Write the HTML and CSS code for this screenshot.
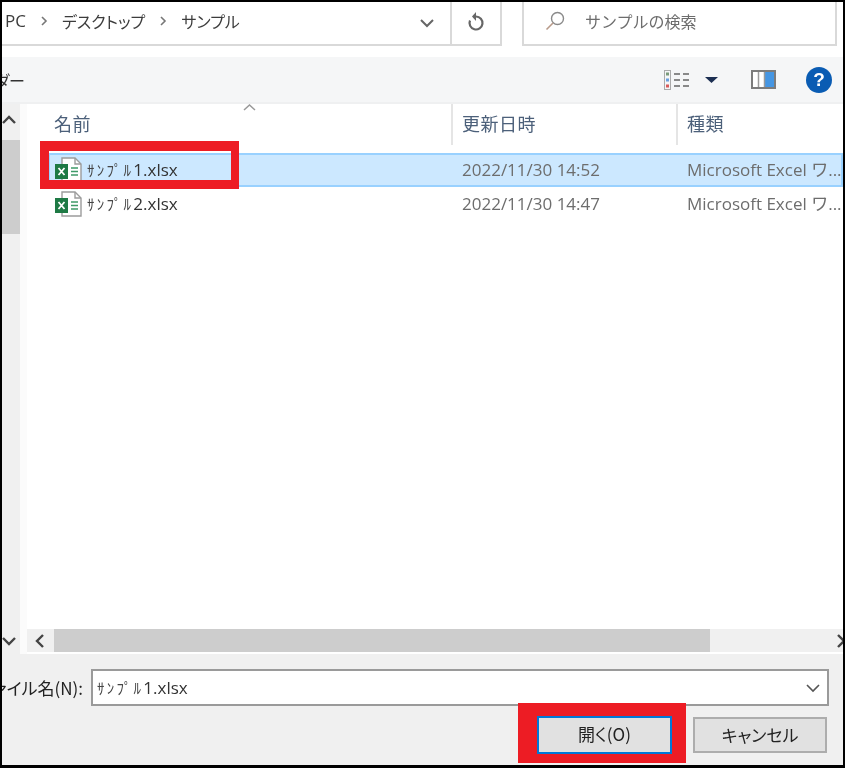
FILE: index.html
```html
<!DOCTYPE html>
<html lang="ja">
<head>
<meta charset="utf-8">
<title>ファイルを開く</title>
<link rel="stylesheet" href="styles.css">
</head>
<body>
<div class="frame">
  <div class="addressrow">
    <div class="address">
      <span class="crumb pc">PC</span>
      <svg class="sep" width="8" height="12" viewBox="0 0 8 12"><path d="M2 2l4 4-4 4" fill="none" stroke="#777" stroke-width="1.6"/></svg>
      <span class="crumb">デスクトップ</span>
      <svg class="sep" width="8" height="12" viewBox="0 0 8 12"><path d="M2 2l4 4-4 4" fill="none" stroke="#777" stroke-width="1.6"/></svg>
      <span class="crumb">サンプル</span>
      <svg class="addr-chev" width="16" height="10" viewBox="0 0 16 10"><path d="M2 2l6 6 6-6" fill="none" stroke="#666" stroke-width="2"/></svg>
    </div>
    <div class="refresh">
      <svg width="18" height="20" viewBox="0 0 18 20"><path d="M9 4.500a6.500 6.500 0 1 1-6 4" fill="none" stroke="#666" stroke-width="2.200"/><path d="M7 0v9l-4-4.500z" fill="#666" transform="translate(2 0)"/></svg>
    </div>
    <div class="search">
      <svg width="22" height="22" viewBox="0 0 22 22"><circle cx="13.500" cy="8.500" r="6" fill="none" stroke="#8a8a8a" stroke-width="1.400"/><path d="M9 13l-6.500 6.500" stroke="#b89a8a" stroke-width="1.600"/></svg>
      <span class="search-text">サンプルの検索</span>
    </div>
  </div>
  <div class="gapband"></div>
  <div class="toolbar">
    <div class="newfolder"><span>新しいフォルダー</span></div>
    <svg class="viewicon" width="26" height="20" viewBox="0 0 26 20">
      <rect x="0.500" y="0.500" width="6" height="19" fill="#f5f6f7" stroke="#aaa"/>
      <rect x="2" y="2.500" width="3" height="3" fill="#7a9a7a"/><rect x="2" y="8.500" width="3" height="3" fill="#6aa0e0"/><rect x="2" y="14.500" width="3" height="3" fill="#d85a5a"/>
      <path d="M10 4h6M19 4h6M10 10h6M19 10h6M10 16h6M19 16h6" stroke="#666" stroke-width="1.500"/>
    </svg>
    <svg class="dropicon" width="13" height="6" viewBox="0 0 13 6"><path d="M0 0h13l-6.500 6z" fill="#1c2f52"/></svg>
    <svg class="paneicon" width="25" height="19" viewBox="0 0 25 19">
      <rect x="1" y="1" width="23" height="17" fill="#fff" stroke="#7c7c7c" stroke-width="2"/>
      <rect x="14" y="2" width="9" height="15" fill="#4596e3"/>
      <path d="M7.500 2v15M13.500 2v15" stroke="#9a9a9a" stroke-width="1.500"/>
    </svg>
    <span class="help">?</span>
  </div>
  <div class="main">
    <div class="vscroll">
      <svg class="vchev" width="16" height="10" viewBox="0 0 16 10"><path d="M1 8l6-6 6 6" fill="none" stroke="#444" stroke-width="2.400"/></svg>
      <div class="vthumb"></div>
      <svg class="vchev bottom" width="16" height="10" viewBox="0 0 16 10"><path d="M1 2l6 6 6-6" fill="none" stroke="#444" stroke-width="2.400"/></svg>
    </div>
    <div class="strip"></div>
    <div class="pane">
      <div class="list">
        <div class="header">
          <div class="col-name head">名前
            <svg class="sort" width="13" height="7" viewBox="0 0 13 7"><path d="M1 6l5.500-5 5.500 5" fill="none" stroke="#999" stroke-width="1.500"/></svg>
          </div>
          <div class="col-date head">更新日時</div>
          <div class="col-type head">種類</div>
        </div>
        <div class="rows">
          <div class="row selected">
            <div class="col-name file">
              <svg class="xl" width="27" height="26" viewBox="0 0 27 26">
                <path d="M7 1h13l6 6v18H7z" fill="#fff" stroke="#9c9c9c" stroke-width="1.400"/><path d="M20 1v6h6" fill="none" stroke="#9c9c9c" stroke-width="1.400"/>
                <rect x="0" y="7" width="13" height="15" fill="#1e7a45"/>
                <path d="M3.500 11l6 7M9.500 11l-6 7" stroke="#fff" stroke-width="1.800"/>
                <path d="M16 11h7M16 14.500h7M16 18h7" stroke="#3f9a68" stroke-width="1.500"/>
              </svg>
              <span class="name"><span class="kana">ｻﾝﾌﾟﾙ</span>1.xlsx</span>
            </div>
            <div class="col-date cell">2022/11/30 14:52</div>
            <div class="col-type cell">Microsoft Excel ワ...</div>
          </div>
          <div class="row">
            <div class="col-name file">
              <svg class="xl" width="27" height="26" viewBox="0 0 27 26">
                <path d="M7 1h13l6 6v18H7z" fill="#fff" stroke="#9c9c9c" stroke-width="1.400"/><path d="M20 1v6h6" fill="none" stroke="#9c9c9c" stroke-width="1.400"/>
                <rect x="0" y="7" width="13" height="15" fill="#1e7a45"/>
                <path d="M3.500 11l6 7M9.500 11l-6 7" stroke="#fff" stroke-width="1.800"/>
                <path d="M16 11h7M16 14.500h7M16 18h7" stroke="#3f9a68" stroke-width="1.500"/>
              </svg>
              <span class="name"><span class="kana">ｻﾝﾌﾟﾙ</span>2.xlsx</span>
            </div>
            <div class="col-date cell">2022/11/30 14:47</div>
            <div class="col-type cell">Microsoft Excel ワ...</div>
          </div>
        </div>
      </div>
      <div class="hscroll">
        <svg class="hchev" width="10" height="16" viewBox="0 0 10 16"><path d="M8 2L2 8l6 6" fill="none" stroke="#444" stroke-width="2.400"/></svg>
        <div class="hthumb"></div>
        <svg class="hchev right" width="10" height="16" viewBox="0 0 10 16"><path d="M2 2l6 6-6 6" fill="none" stroke="#444" stroke-width="2.400"/></svg>
      </div>
    </div>
  </div>
  <div class="bottom-panel">
    <div class="filerow">
      <div class="filelabel"><span>ファイル名(N):</span></div>
      <div class="fileinput">
        <span class="name"><span class="kana">ｻﾝﾌﾟﾙ</span>1.xlsx</span>
        <svg width="16" height="10" viewBox="0 0 16 10"><path d="M2 2l6 6 6-6" fill="none" stroke="#555" stroke-width="1.600"/></svg>
      </div>
    </div>
    <div class="buttons">
      <div class="btn primary">開く(O)</div>
      <div class="btn cancel">キャンセル</div>
    </div>
  </div>
  <div class="mark mark-file"></div>
  <div class="mark mark-open"></div>
</div>
</body>
</html>
```

FILE: styles.css
```css
* { box-sizing: border-box; }
html, body { margin: 0; padding: 0; background: #fff; }
body { width: 845px; height: 768px; overflow: hidden; font-family: "Open Sans", "Noto Sans CJK JP", sans-serif; }

.frame {
  position: relative;
  width: 845px;
  height: 768px;
  border: solid #000;
  border-width: 2px 2px 3px 2px;
  background: #fff;
  overflow: hidden;
  display: flex;
  flex-direction: column;
  filter: blur(0.55px);
}

.addressrow { display: flex; height: 44px; flex: none; }
.address {
  width: 448px;
  border-bottom: 2px solid #d9d9d9;
  display: flex;
  align-items: center;
  padding-left: 3px;
  position: relative;
  padding-bottom: 4px;
}
.crumb { font-size: 16px; color: #3c3c3c; font-feature-settings: "palt"; font-family: "Noto Sans CJK JP", sans-serif; line-height: 24px; }
.crumb.pc { font-family: "Open Sans", sans-serif; font-size: 17px; }
.sep { margin: 0 14px 0 14px; }
.addr-chev { margin-left: auto; margin-right: 15px; margin-top: 4px; }

.refresh {
  width: 52px;
  border: solid #d9d9d9;
  border-width: 0 2px 2px 2px;
  display: flex;
  align-items: center;
  justify-content: center;
  padding-bottom: 2px;
}
.search {
  width: 315px;
  margin-left: 20px;
  border: solid #d9d9d9;
  border-width: 0 2px 2px 2px;
  display: flex;
  align-items: center;
  padding: 0 0 4px 20px;
}
.search-text { font-size: 16px; color: #6d6d6d; margin-left: 19px; font-family: "Noto Sans CJK JP", sans-serif; }

.gapband { height: 11px; flex: none; }

.toolbar {
  height: 47px;
  flex: none;
  background: #f5f6f7;
  border-bottom: 2px solid #eff0f1;
  display: flex;
  align-items: center;
  position: relative;
}
.newfolder {
  width: 23px;
  flex: none;
  overflow: hidden;
  display: flex;
  justify-content: flex-end;
  font-size: 16px;
  color: #333;
  white-space: nowrap;
  font-family: "Noto Sans CJK JP", sans-serif;
  font-feature-settings: "palt";
  margin-right: 639px;
}
.newfolder span { flex: none; }
.viewicon { flex: none; margin-right: 15px; }
.dropicon { flex: none; margin-right: 33px; }
.paneicon { flex: none; margin-right: 30px; }
.help {
  width: 26px;
  height: 26px;
  flex: none;
  border-radius: 50%;
  background: #0a5cb3;
  color: #fff;
  font: 700 19px/26px "Liberation Sans", sans-serif;
  text-align: center;
}

.main { display: flex; flex: 1; min-height: 0; }
.vscroll {
  width: 18px;
  flex: none;
  background: #f0f0f0;
  display: flex;
  flex-direction: column;
  height: 550px;
}
.vchev { margin: 11px 0 0 0; flex: none; }
.vchev.bottom { margin: auto 0 8px 0; }
.vthumb { height: 94px; margin-top: 15px; background: #cdcdcd; flex: none; }
.strip { width: 7px; flex: none; background: #fbfbfb; height: 550px; }

.pane { flex: 1; min-width: 0; display: flex; flex-direction: column; height: 548px; }
.list { flex: 1; min-height: 0; overflow: hidden; }
.header { display: flex; height: 41px; }
.col-name { width: 424px; flex: none; position: relative; }
.col-date { width: 225px; flex: none; padding-left: 9px; }
.col-type { flex: 1; padding-left: 9px; white-space: nowrap; overflow: hidden; }
.head {
  font-size: 18px;
  color: #4c607a;
  font-family: "Noto Sans CJK JP", sans-serif;
  line-height: 38px;
  letter-spacing: 0.5px;
}
.col-name.head { padding-left: 27px; }
.col-date.head, .col-type.head { border-left: 2px solid #e5e5e5; }
.sort { position: absolute; left: 216px; top: 0; }

.rows { padding-top: 8px; }
.row { display: flex; height: 34px; align-items: center; border: 2px solid transparent; margin-left: 21px; }
.row + .row { height: 33px; }
.row.selected { background: #cce8ff; border-color: #99d1ff; }
.file { width: 403px; display: flex; align-items: center; padding-left: 5px; }
.xl { flex: none; margin-right: 5px; }
.name { font-size: 17px; color: #333; white-space: nowrap; line-height: 24px; }
.kana { font-family: "Noto Sans CJK JP", sans-serif; font-size: 15px; letter-spacing: 2.200px; color: #444; }
.cell { font-size: 17px; color: #6d6d6d; line-height: 24px; }

.hscroll {
  height: 23px;
  flex: none;
  background: #f0f0f0;
  display: flex;
  align-items: center;
  position: relative;
  padding-left: 8px;
}
.hchev { flex: none; }
.hthumb { width: 656px; height: 23px; background: #cdcdcd; margin-left: 9px; flex: none; }
.hchev.right { margin-left: auto; margin-right: -3px; }

.bottom-panel {
  height: 111px;
  flex: none;
  background: #f0f0f0;
  padding-top: 15px;
  display: flex;
  flex-direction: column;
}
.filerow { display: flex; align-items: center; height: 37px; }
.filelabel {
  width: 81px;
  flex: none;
  overflow: hidden;
  display: flex;
  justify-content: flex-end;
  font-size: 17px;
  color: #222;
  white-space: nowrap;
  font-family: "Noto Sans CJK JP", "Open Sans", sans-serif;
  font-feature-settings: "palt";
}
.filelabel span { flex: none; }
.fileinput {
  width: 738px;
  height: 37px;
  margin-left: 8px;
  background: #fff;
  border: 2px solid #9a9a9a;
  display: flex;
  align-items: center;
  justify-content: space-between;
  padding: 0 6px 0 4px;
}
.buttons { display: flex; padding-left: 535px; margin-top: 10px; gap: 21px; }
.btn {
  height: 38px;
  background: #e1e1e1;
  font-family: "Noto Sans CJK JP", sans-serif;
  font-size: 17px;
  color: #222;
  font-feature-settings: "palt";
  display: flex;
  align-items: center;
  justify-content: center;
  padding-bottom: 3px;
  border: 2px solid #adadad;
}
.btn.primary { width: 135px; border: 2px solid #0078d7; }
.btn.cancel { width: 134px; height: 36px; margin-top: 1px; padding-bottom: 2px; }

.mark { position: absolute; border-style: solid; border-color: #ed1c24; }
.mark-file { left: 38px; top: 139px; width: 199px; height: 48px; border-width: 10px 8px 9px 9px; }
.mark-open { left: 516px; top: 701px; width: 168px; height: 60px; border-width: 13px 14px 9px 19px; }
```
